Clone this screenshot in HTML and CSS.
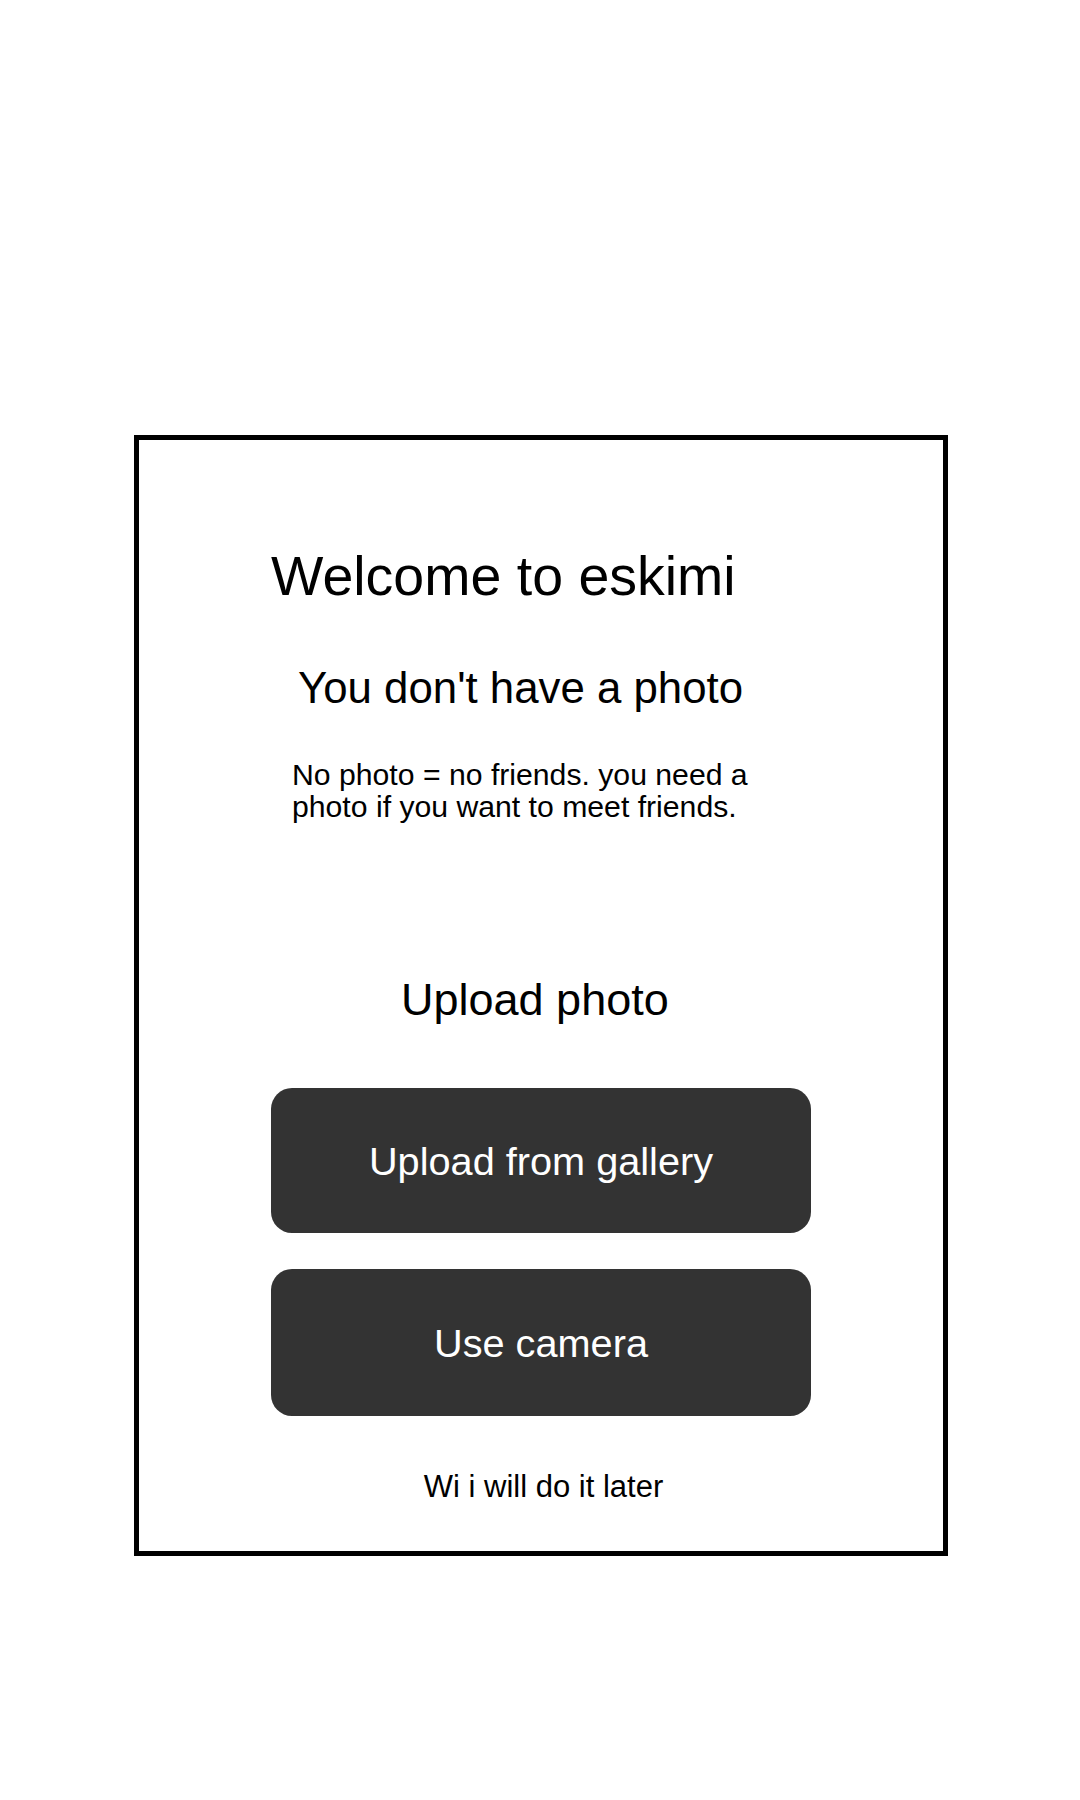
FILE: index.html
```html
<!DOCTYPE html>
<html lang="en">
<head>
<meta charset="utf-8">
<title>Welcome to eskimi</title>
<link rel="stylesheet" href="styles.css">
</head>
<body>
<main class="card">
  <h1 class="title">Welcome to eskimi</h1>
  <h2 class="subtitle">You don't have a photo</h2>
  <p class="lead">No photo = no friends. you need a photo if you want to meet friends.</p>
  <h3 class="upload-heading">Upload photo</h3>
  <div class="actions">
    <button class="btn btn-gallery" type="button">Upload from gallery</button>
    <button class="btn btn-camera" type="button">Use camera</button>
  </div>
  <a class="later" href="#">Wi i will do it later</a>
</main>
</body>
</html>
```

FILE: styles.css
```css
html, body {
  margin: 0;
  padding: 0;
  background: #ffffff;
}

body {
  font-family: "Liberation Sans", Arial, sans-serif;
  color: #000000;
}

.card {
  box-sizing: border-box;
  width: 814px;
  margin: 435px 0 0 134px;
  border: 5px solid #000000;
  padding: 0 0 47px 0;
  display: flex;
  flex-direction: column;
}

.title {
  margin: 104px 0 0 132px;
  font-size: 55.5px;
  line-height: 64px;
  font-weight: normal;
}

.subtitle {
  margin: 55px 0 0 159px;
  font-size: 43.8px;
  line-height: 50px;
  font-weight: normal;
}

.lead {
  margin: 46px 0 0 153px;
  width: 480px;
  font-size: 30.2px;
  line-height: 32px;
}

.upload-heading {
  margin: 151px 0 0 262px;
  font-size: 45px;
  line-height: 52px;
  font-weight: normal;
}

.actions {
  margin: 62px 0 0 132px;
  display: flex;
  flex-direction: column;
  gap: 36px;
  width: 540px;
}

.btn {
  display: flex;
  align-items: center;
  justify-content: center;
  width: 540px;
  border: none;
  border-radius: 21px;
  background: #333333;
  color: #ffffff;
  font-family: "Liberation Sans", Arial, sans-serif;
  font-size: 39.7px;
  line-height: 46px;
  padding: 0;
  margin: 0;
}

.btn-gallery {
  height: 145px;
}

.btn-camera {
  height: 147px;
}

.later {
  margin: 54px 0 0 5px;
  align-self: center;
  font-size: 31px;
  line-height: 34px;
  color: #000000;
  text-decoration: none;
}
```
